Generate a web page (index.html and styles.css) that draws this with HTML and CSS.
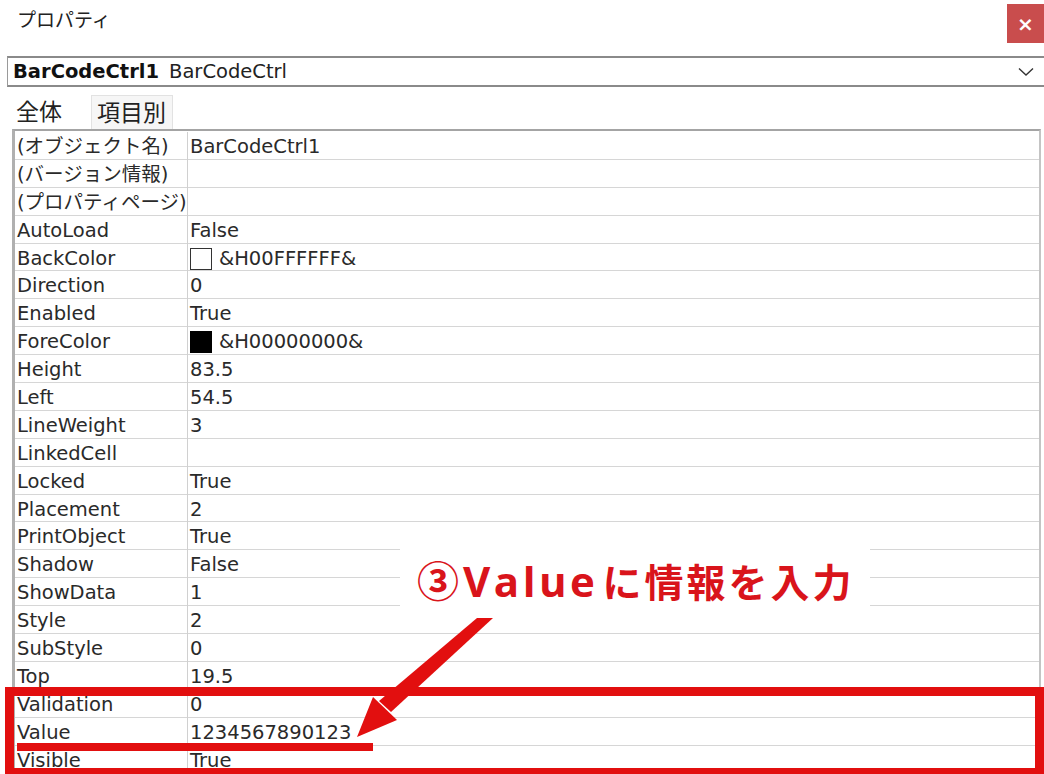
FILE: index.html
```html
<!DOCTYPE html>
<html lang="ja">
<head>
<meta charset="utf-8">
<title>プロパティ</title>
<link rel="stylesheet" href="styles.css">
</head>
<body>
<div class="window">
  <header class="titlebar">
    <div class="title">プロパティ</div>
    <div class="close">×</div>
  </header>
  <div class="combo">
    <span class="combo-name">BarCodeCtrl1</span>
    <span class="combo-type">BarCodeCtrl</span>
    <svg class="chevron" width="16" height="10" viewBox="0 0 16 10"><path d="M1 1.5 L8 8 L15 1.5" fill="none" stroke="#333" stroke-width="1.4"/></svg>
  </div>
  <div class="tabs">
    <div class="tab active">全体</div>
    <div class="tab">項目別</div>
  </div>
  <div class="grid">
    <div class="row"><div class="name">(オブジェクト名)</div><div class="val">BarCodeCtrl1</div></div>
    <div class="row"><div class="name">(バージョン情報)</div><div class="val"></div></div>
    <div class="row"><div class="name">(プロパティページ)</div><div class="val"></div></div>
    <div class="row"><div class="name">AutoLoad</div><div class="val">False</div></div>
    <div class="row"><div class="name">BackColor</div><div class="val"><span class="swatch white"></span>&amp;H00FFFFFF&amp;</div></div>
    <div class="row"><div class="name">Direction</div><div class="val">0</div></div>
    <div class="row"><div class="name">Enabled</div><div class="val">True</div></div>
    <div class="row"><div class="name">ForeColor</div><div class="val"><span class="swatch black"></span>&amp;H00000000&amp;</div></div>
    <div class="row"><div class="name">Height</div><div class="val">83.5</div></div>
    <div class="row"><div class="name">Left</div><div class="val">54.5</div></div>
    <div class="row"><div class="name">LineWeight</div><div class="val">3</div></div>
    <div class="row"><div class="name">LinkedCell</div><div class="val"></div></div>
    <div class="row"><div class="name">Locked</div><div class="val">True</div></div>
    <div class="row"><div class="name">Placement</div><div class="val">2</div></div>
    <div class="row"><div class="name">PrintObject</div><div class="val">True</div></div>
    <div class="row"><div class="name">Shadow</div><div class="val">False</div></div>
    <div class="row"><div class="name">ShowData</div><div class="val">1</div></div>
    <div class="row"><div class="name">Style</div><div class="val">2</div></div>
    <div class="row"><div class="name">SubStyle</div><div class="val">0</div></div>
    <div class="row"><div class="name">Top</div><div class="val">19.5</div></div>
    <div class="row"><div class="name">Validation</div><div class="val">0</div></div>
    <div class="row"><div class="name">Value</div><div class="val">1234567890123</div></div>
    <div class="row"><div class="name">Visible</div><div class="val">True</div></div>
  </div>
</div>

<div class="callout"><span class="c-num">③</span><span class="c-latin">Value</span><span class="c-jp">に情報を入力</span></div>
<div class="highlight-box"></div>
<div class="underline"></div>
<svg class="arrow" width="1044" height="774" viewBox="0 0 1044 774">
  <polygon points="477,618 493,618 391,712 379,701" fill="#e20f0f"/>
  <polygon points="357,737 373,697 397,720" fill="#e20f0f"/>
</svg>
</body>
</html>
```

FILE: styles.css
```css
html, body {
  margin: 0;
  padding: 0;
  background: #ffffff;
  width: 1044px;
  height: 774px;
  overflow: hidden;
}

.window {
  font-family: "Noto Sans CJK JP", "Noto Sans", sans-serif;
  color: #1e1e1e;
  position: relative;
}

.titlebar {
  display: flex;
  justify-content: space-between;
  align-items: flex-start;
  height: 52px;
  padding-top: 4px;
  box-sizing: border-box;
}

.title {
  font-size: 19px;
  margin-left: 17px;
  margin-top: 2px;
  line-height: 26px;
  color: #222;
}

.close {
  width: 37px;
  height: 39px;
  background: #c94d4d;
  color: #ffffff;
  font-family: "DejaVu Sans", sans-serif;
  font-weight: bold;
  font-size: 20px;
  display: flex;
  align-items: center;
  justify-content: center;
}

.combo {
  margin-top: 4px;
  margin-left: 7px;
  height: 31px;
  border-top: 2px solid #8a8a8a;
  border-bottom: 2px solid #8a8a8a;
  border-left: 1px solid #9a9a9a;
  display: flex;
  align-items: center;
  box-sizing: border-box;
  padding-left: 5px;
  font-family: "DejaVu Sans", "Noto Sans CJK JP", sans-serif;
  font-size: 19.5px;
  color: #111;
}

.combo-name {
  font-weight: bold;
}

.combo-type {
  margin-left: 10px;
  color: #222;
}

.chevron {
  margin-left: auto;
  margin-right: 10px;
}

.tabs {
  display: flex;
  align-items: flex-end;
  height: 42px;
  padding-left: 7px;
}

.tab {
  font-size: 23px;
  line-height: 31px;
  height: 34px;
  box-sizing: border-box;
  color: #222;
}

.tab.active {
  width: 84px;
  padding-left: 9px;
  background: #ffffff;
}

.tab:not(.active) {
  border: 1px solid #e2e2e2;
  border-bottom: none;
  background: #f6f6f6;
  width: 82px;
  padding-left: 5px;
}

.grid {
  margin-left: 12px;
  width: 1029px;
  border-top: 2px solid #a4a4a4;
  border-left: 3px solid #b0b0b0;
  border-right: 2px solid #c4c4c4;
  box-sizing: border-box;
  padding-top: 1px;
  font-size: 19.5px;
  font-family: "DejaVu Sans", "Noto Sans CJK JP", sans-serif;
  color: #2a2a2a;
}

.row {
  display: grid;
  grid-template-columns: 173px 1fr;
  height: 27.9px;
  border-bottom: 1px solid #d6d6d6;
  box-sizing: border-box;
  line-height: 30px;
}

.name {
  padding-left: 2px;
  border-right: 1px solid #d0d0d0;
  white-space: nowrap;
}

.val {
  padding-left: 2px;
  display: flex;
  align-items: center;
  white-space: nowrap;
}

.swatch {
  display: inline-block;
  width: 22px;
  height: 22px;
  box-sizing: border-box;
  margin-right: 7px;
}

.swatch.white {
  border: 1.5px solid #333;
  background: #fff;
}

.swatch.black {
  background: #000;
}

.callout {
  position: absolute;
  left: 400px;
  top: 545px;
  width: 470px;
  height: 67px;
  background: #ffffff;
  color: #d9141b;
  font-family: "Noto Sans CJK JP", sans-serif;
  font-weight: bold;
  line-height: 67px;
  padding-left: 17px;
  box-sizing: border-box;
  white-space: nowrap;
  display: flex;
  align-items: baseline;
}

.c-num {
  font-size: 42px;
}

.c-latin {
  font-family: "Open Sans", "Noto Sans CJK JP", sans-serif;
  font-size: 42px;
  letter-spacing: 3.5px;
  margin-left: 4px;
}

.c-jp {
  font-size: 39px;
  letter-spacing: 3px;
  margin-left: 4px;
}

.highlight-box {
  position: absolute;
  left: 5px;
  top: 687px;
  width: 1039px;
  height: 90px;
  border: 9px solid #e20f0f;
  box-sizing: border-box;
}

.underline {
  position: absolute;
  left: 17px;
  top: 743px;
  width: 356px;
  height: 8px;
  background: #e20f0f;
}

.arrow {
  position: absolute;
  left: 0;
  top: 0;
  pointer-events: none;
}
```
